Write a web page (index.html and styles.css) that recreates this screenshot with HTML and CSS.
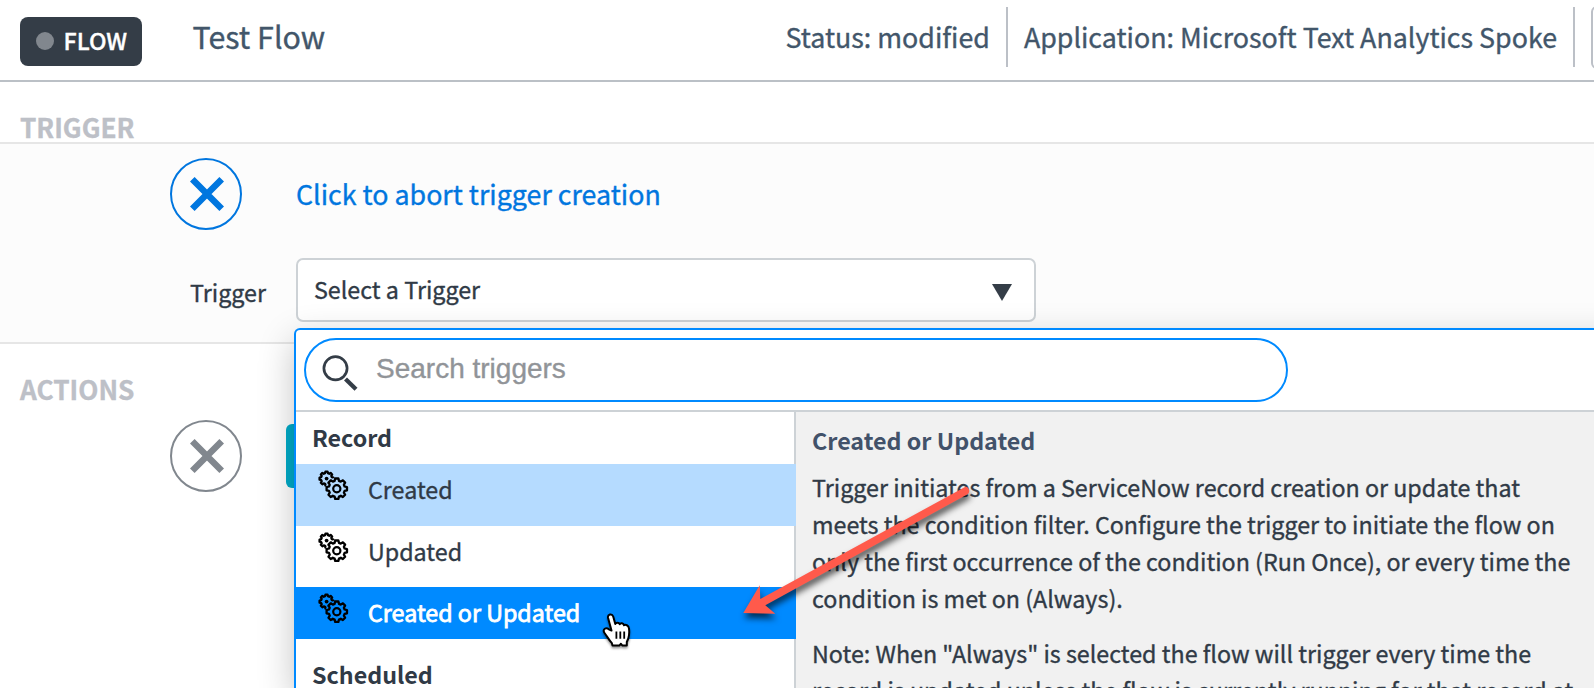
FILE: index.html
```
<!DOCTYPE html>
<html lang="en">
<head>
<meta charset="utf-8">
<title>Test Flow</title>
<link rel="stylesheet" href="styles.css">
</head>
<body>
<svg class="defs" aria-hidden="true">
  <defs>
    <path id="gear" d="M7.8-2.2 10.2-1.6V1.6L7.8 2.2 7.08 3.96 8.34 6.08 6.08 8.34 3.96 7.08 2.2 7.8 1.6 10.2H-1.6L-2.2 7.8-3.96 7.08-6.08 8.34-8.34 6.08-7.08 3.96-7.8 2.2-10.2 1.6V-1.6L-7.8-2.2-7.08-3.96-8.34-6.08-6.08-8.34-3.96-7.08-2.2-7.8-1.6-10.2H1.6L2.2-7.8 3.96-7.08 6.08-8.34 8.34-6.08 7.08-3.96Z"/>
    <mask id="behind" maskUnits="userSpaceOnUse" x="0" y="0" width="32" height="32">
      <rect width="32" height="32" fill="#fff"/>
      <circle cx="19.8" cy="19.7" r="11" fill="#000"/>
    </mask>
    <symbol id="gears" viewBox="0 0 32 32">
      <g fill="none" stroke="#000" stroke-linejoin="round">
        <g mask="url(#behind)">
          <use href="#gear" transform="translate(9.5 9.6) scale(.68)" stroke-width="3.4"/>
        </g>
        <use href="#gear" transform="translate(19.8 19.7)" stroke-width="2.3"/>
        <circle cx="19.8" cy="19.7" r="3.6" stroke-width="2.2"/>
      </g>
      <circle cx="9.6" cy="9.6" r="1.9"/>
    </symbol>
    <symbol id="cross" viewBox="0 0 34 34">
      <path d="M2.3 2.3 31.7 31.7M31.7 2.3 2.3 31.7" fill="none" stroke="currentColor" stroke-width="6.5"/>
    </symbol>
  </defs>
</svg>

<header class="header">
  <div class="badge"><span class="badge-dot"></span><span class="badge-text">FLOW</span></div>
  <h1 class="title">Test Flow</h1>
  <div class="meta">
    <span class="meta-item">Status: modified</span>
    <span class="meta-item">Application: Microsoft Text Analytics Spoke</span>
    <span class="meta-button"></span>
  </div>
</header>

<main>
  <section>
    <h2 class="section-title">TRIGGER</h2>
    <div class="panel">
      <div class="abort">
        <span class="circle"><svg class="cross"><use href="#cross"/></svg></span>
        <a class="abort-link">Click to abort trigger creation</a>
      </div>
      <div class="field">
        <label class="field-label">Trigger</label>
        <div class="select">
          <span>Select a Trigger</span>
          <svg class="caret" viewBox="0 0 20 17"><path d="M0 0H20L10 17Z"/></svg>
        </div>
      </div>
    </div>
  </section>
  <section>
    <h2 class="section-title">ACTIONS</h2>
    <div class="action">
      <span class="circle circle-muted"><svg class="cross"><use href="#cross"/></svg></span>
      <span class="action-button"></span>
    </div>
  </section>
</main>

<div class="dropdown">
  <div class="search-row">
    <div class="search">
      <svg class="magnifier" viewBox="0 0 36 36"><circle cx="13.5" cy="13.3" r="11.6" fill="none" stroke-width="2.7"/><path d="M23.5 23.9 34 34.3" stroke-width="4.2"/></svg>
      <span class="placeholder">Search triggers</span>
    </div>
  </div>
  <div class="dropdown-body">
    <div class="options">
      <div class="group">Record</div>
      <div class="option option-light"><svg class="gears"><use href="#gears"/></svg>Created</div>
      <div class="option option-mid"><svg class="gears"><use href="#gears"/></svg>Updated</div>
      <div class="option option-active"><svg class="gears"><use href="#gears"/></svg>Created or Updated</div>
      <div class="group group-next">Scheduled</div>
    </div>
    <div class="detail">
      <h3 class="detail-title">Created or Updated</h3>
      <p class="detail-text">Trigger initiates from a ServiceNow record creation or update that<br>meets the condition filter. Configure the trigger to initiate the flow on<br>only the first occurrence of the condition (Run Once), or every time the<br>condition is met on (Always).</p>
      <p class="detail-text">Note: When "Always" is selected the flow will trigger every time the<br>record is updated unless the flow is currently running for that record at</p>
    </div>
  </div>
</div>

<svg class="arrow" viewBox="733 476 250 160"><path d="M743.3 613 759.7 585.3 760.3 599 965 487Q968 486.3 969 489.5 970 492 968 494L765.3 605.3 775.3 613.7Z"/></svg>
<svg class="cursor" viewBox="0 0 32 38"><path class="hand" d="M9.5 17.5 6.1 5C5.3 1 10 .2 11.2 3.5L13.3 11C14 9.2 17 9.2 17.7 11.2 18.5 9.6 21.6 10 22 12.2 23.5 11.3 26.500 12.300 26.900 15 27.500 18.500 27.300 22 26.300 25.500L24.800 29V32.600H20.500L18.800 30.800 17.300 32.600H10.500L9.900 30.200C7 27 5.200 23.500 2.200 19.500 .500 16.500 4 13.700 6.800 16.300Z"/><path class="hand-lines" d="M14.400 18.500V25.700M18.300 18.500V25.700M22.200 18.500V25.700"/></svg>
</body>
</html>
```
FILE: styles.css
```
* { box-sizing: border-box; }

html { height: 100%; overflow: hidden; }

body {
  margin: 0;
  height: 688px;
  position: relative;
  overflow: hidden;
  background: #fff;
  color: #303a46;
  font: 400 23.28px/37px "Noto Sans CJK SC", "Noto Sans", sans-serif;
  -webkit-text-stroke: .35px currentColor;
}

h1, h2, h3, p { margin: 0; }
.defs { position: absolute; width: 0; height: 0; }

/* Header */
.header {
  display: flex;
  height: 82px;
  padding-left: 20px;
  border-bottom: 2px solid #bbc0c6;
  color: #42566a;
  overflow: hidden;
}
.badge {
  display: flex;
  align-items: center;
  width: 122px;
  height: 49px;
  margin-top: 17px;
  padding: 0 0 1px 16px;
  border-radius: 8px;
  background: #343d47;
  color: #fff;
  font-weight: 500;
}
.badge-text { padding-bottom: 2px; line-height: 34px; }
.badge-dot {
  width: 18px;
  height: 18px;
  margin-right: 9.5px;
  border-radius: 50%;
  background: #81878e;
}
.title {
  margin-left: 50.5px;
  font-size: 30.4px;
  font-weight: 400;
  line-height: 72px;
}
.meta {
  display: flex;
  align-items: flex-start;
  margin-left: auto;
  padding-top: 7px;
  font-size: 26.8px;
  line-height: 60px;
}
.meta-item {
  padding: 0 16px;
  border-right: 2px solid #bcc0c7;
  white-space: nowrap;
}
.meta-button {
  width: 40px;
  height: 63px;
  margin: -1px -37px 0 16px;
  border: 2px solid #bcc0c7;
  border-radius: 6px;
}

/* Canvas */
.section-title {
  padding: 31px 0 0 20px;
  color: #bdc0c7;
  font-size: 26.2px;
  font-weight: 700;
  line-height: 29px;
}
.panel {
  height: 202px;
  padding-top: 14px;
  border: solid #e6e6e6;
  border-width: 2px 0;
  background: #fcfcfc;
}
.abort, .action {
  display: flex;
  padding-left: 170px;
}
.abort { align-items: center; gap: 54px; }
.circle {
  display: grid;
  place-items: center;
  width: 72px;
  height: 72px;
  padding-left: 2px;
  border: 2px solid currentColor;
  border-radius: 50%;
  color: #0076df;
}
.circle-muted { color: #81878e; }
.cross { width: 34px; height: 34px; }
.abort-link { padding-bottom: 2px; color: #0076df; font-size: 26.8px; }
.field {
  display: grid;
  grid-template-columns: 266px 740px;
  column-gap: 30px;
  margin-top: 28px;
}
.field-label { padding-top: 16px; text-align: right; }
.select {
  display: flex;
  align-items: center;
  justify-content: space-between;
  height: 64px;
  padding: 0 22px 2px 16px;
  border: 2px solid #cdd2d6;
  border-radius: 7px;
  background: #fff;
}
.caret { width: 20px; height: 17px; margin-top: 6px; fill: #343d47; }
.action { gap: 44px; padding-top: 16px; }
.action-button {
  width: 120px;
  height: 64px;
  margin-top: 4px;
  border-radius: 6px;
  background: #00abc8;
}

/* Trigger menu */
.dropdown {
  position: absolute;
  left: 294px;
  right: -40px;
  top: 328px;
  bottom: 0;
  border: 2px solid #008aff;
  border-bottom: 0;
  border-radius: 6px 6px 0 0;
  background: #fff;
  box-shadow: 0 12px 36px rgba(0, 0, 0, .24);
  overflow: hidden;
}
.search-row {
  height: 82px;
  padding: 8px;
  border-bottom: 2px solid #cdd2d6;
}
.search {
  display: flex;
  width: 984px;
  height: 64px;
  padding: 15px 0 0 16px;
  border: 2px solid #008aff;
  border-radius: 32px;
}
.magnifier { width: 36px; height: 36px; stroke: #343d47; }
.placeholder {
  margin: -2px 0 0 18px;
  color: #919498;
  font: 28px/32px "Liberation Sans", sans-serif;
}
.dropdown-body { display: flex; height: 276px; }
.options { width: 500px; border-right: 2px solid #cdd2d6; }
.group {
  height: 52px;
  padding-left: 16px;
  font-weight: 700;
  line-height: 50px;
  -webkit-text-stroke-width: 0;
}
.group-next { height: auto; padding-top: 15px; line-height: 40px; }
.option {
  display: flex;
  align-items: flex-start;
  height: 62px;
  margin-right: -2px;
  padding-left: 21px;
  line-height: 50px;
}
.option-light { background: #b5dbff; }
.option-mid { height: 61px; }
.option-active {
  height: 52px;
  background: #008aff;
  color: #fff;
  -webkit-text-stroke-width: .8px;
}
.gears { width: 32px; height: 32px; margin: 5px 19px 0 0; }
.detail {
  flex: 1;
  padding: 10px 0 0 16px;
  background: #f1f1f1;
  white-space: nowrap;
}
.detail-title {
  margin-bottom: 10px;
  color: #42526a;
  font-size: inherit;
  font-weight: 700;
  -webkit-text-stroke-width: 0;
}
.detail-text + .detail-text { margin-top: 18px; }

/* Pointer and callout above the menu */
.arrow {
  position: absolute;
  left: 733px;
  top: 476px;
  width: 250px;
  height: 160px;
  fill: #ff5a4b;
  filter: drop-shadow(1px 5px 3px rgba(0, 0, 0, .65));
}
.cursor {
  position: absolute;
  left: 602px;
  top: 613px;
  width: 32px;
  height: 38px;
  filter: drop-shadow(0 2px 1px rgba(0, 0, 0, .4));
}
.hand { fill: #fff; stroke: #000; stroke-width: 2; stroke-linejoin: round; }
.hand-lines { stroke: #000; stroke-width: 1.8; }
```
